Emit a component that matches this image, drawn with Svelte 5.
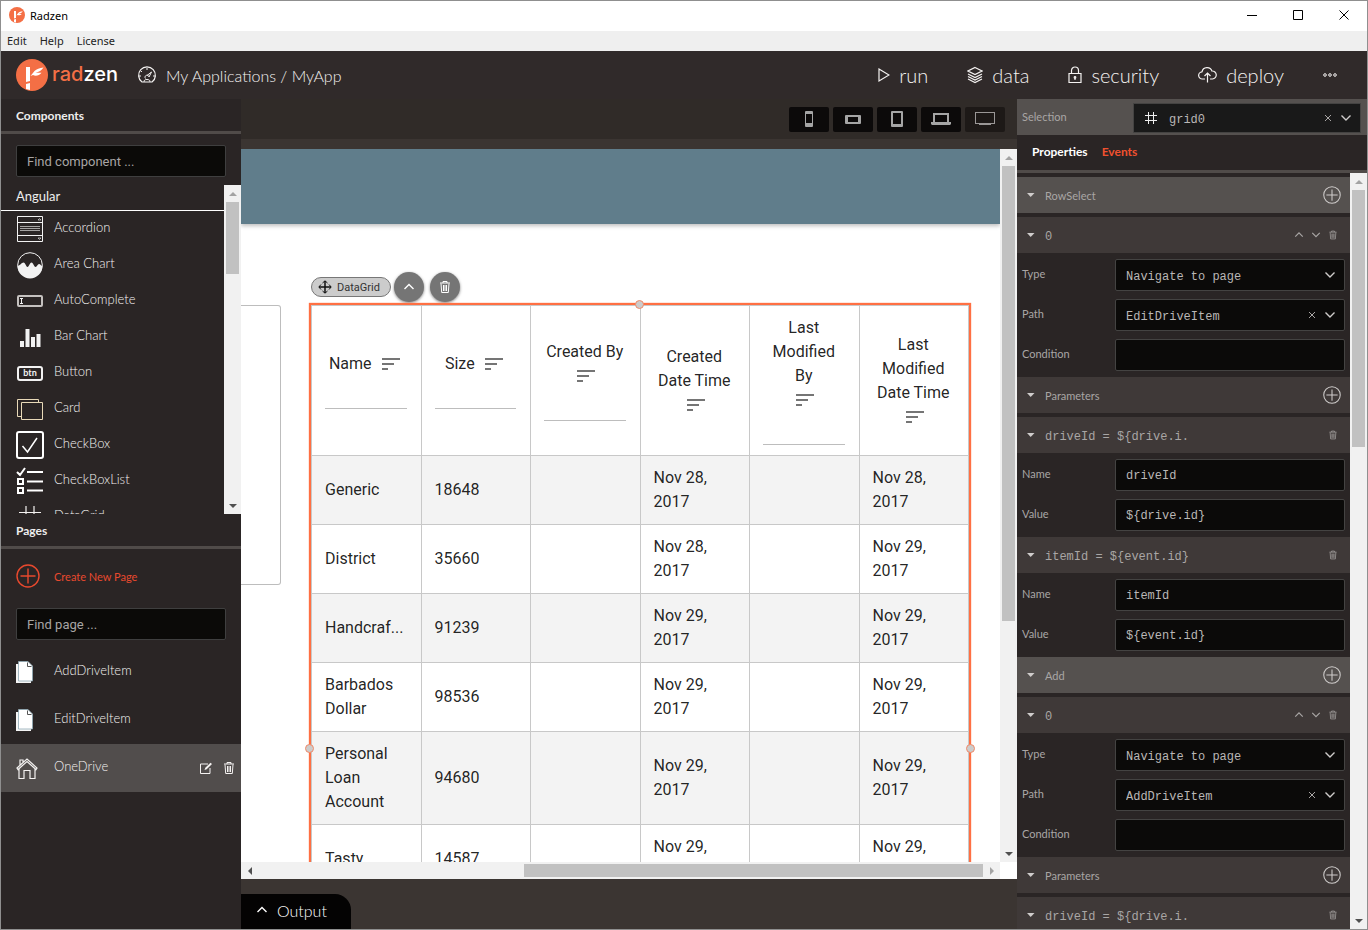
<script>
	const actions = ['run', 'data', 'security', 'deploy'];

	const devices = [
		{ icon: 'phone', text: 'Phone' },
		{ icon: 'phone-landscape', text: 'Phone landscape' },
		{ icon: 'tablet', text: 'Tablet' },
		{ icon: 'laptop', text: 'Laptop' },
		{ icon: 'desktop', text: 'Desktop', active: true }
	];

	const components = [
		{ icon: 'accordion', text: 'Accordion' },
		{ icon: 'area', text: 'Area Chart' },
		{ icon: 'autocomplete', text: 'AutoComplete' },
		{ icon: 'bars', text: 'Bar Chart' },
		{ icon: 'btn', text: 'Button' },
		{ icon: 'card', text: 'Card' },
		{ icon: 'checkbox', text: 'CheckBox' },
		{ icon: 'checklist', text: 'CheckBoxList' },
		{ icon: 'datagrid', text: 'DataGrid' }
	];

	const pages = [
		{ icon: 'page', text: 'AddDriveItem' },
		{ icon: 'page', text: 'EditDriveItem' },
		{ icon: 'home', text: 'OneDrive', active: true }
	];

	const columns = [
		{ title: 'Name', filter: true },
		{ title: 'Size', filter: true },
		{ title: 'Created By', filter: true },
		{ title: 'Created Date Time' },
		{ title: 'Last Modified By', filter: true },
		{ title: 'Last Modified Date Time' }
	];

	const rows = [
		['Generic', '18648', '', 'Nov 28, 2017', '', 'Nov 28, 2017'],
		['District', '35660', '', 'Nov 28, 2017', '', 'Nov 29, 2017'],
		['Handcraf...', '91239', '', 'Nov 29, 2017', '', 'Nov 29, 2017'],
		['Barbados Dollar', '98536', '', 'Nov 29, 2017', '', 'Nov 29, 2017'],
		['Personal Loan Account', '94680', '', 'Nov 29, 2017', '', 'Nov 29, 2017'],
		['Tasty', '14587', '', 'Nov 29, 2017', '', 'Nov 29, 2017']
	];

	const events = [
		{
			name: 'RowSelect',
			path: 'EditDriveItem',
			params: [
				{ title: 'driveId = ${drive.i.', name: 'driveId', value: '${drive.id}' },
				{ title: 'itemId = ${event.id}', name: 'itemId', value: '${event.id}' }
			]
		},
		{
			name: 'Add',
			path: 'AddDriveItem',
			params: [{ title: 'driveId = ${drive.i.', name: 'driveId', value: '${drive.id}' }]
		}
	];
</script>

{#snippet icon(name)}
	{#if name === 'logo'}
		<svg class="ic" viewBox="0 0 32 32" width="32" height="32">
			<circle cx="16" cy="16" r="16" fill="#f46f45" />
			<path d="M10 8h4v14l-4 1zM10 25l4-1v7l-4-1z" fill="#fff" />
			<path d="M14.500 17l4-5c2-2 5-3 9-3.500-2 3-4.500 4.300-8 5.300h6c-2 2.700-6 3.700-8.500 2.200z" fill="#fff" />
		</svg>
	{:else if name === 'gauge'}
		<svg class="ic line" viewBox="0 0 20 18" width="20" height="18">
			<path d="M5 16a8.400 8.400 0 1 1 10 0z" stroke-width="1.200" />
			<path d="M8.500 12.500a2 2 0 1 1 3.500-1.500l2.500-5-4.500 3.500M10 2v2M4 5l1 1M2 10h2M16 10h2M7 16c0-2 1-2.500 3-2.500s3 .5 3 2.500" />
		</svg>
	{:else if name === 'run'}
		<svg class="ic line" viewBox="0 0 12 16" width="12" height="16"><path d="M1 2l10 6-10 6z" stroke-width="1.200" /></svg>
	{:else if name === 'data'}
		<svg class="ic line" viewBox="0 0 16 18" width="16" height="18" stroke-width="1.200">
			<path d="M8 1.500l7 3.500-7 3.500L1 5zM1 8l7 3.500L15 8M1 10.500L8 14l7-3.500M1 13l7 3.500 7-3.500" />
		</svg>
	{:else if name === 'security'}
		<svg class="ic line" viewBox="0 0 14 18" width="14" height="18" stroke-width="1.200">
			<path d="M1 7.500h12v9H1zM3.500 7.500v-3a3.500 3.500 0 0 1 7 0v3M7 11v3" />
			<circle cx="7" cy="11.500" r=".8" />
		</svg>
	{:else if name === 'deploy'}
		<svg class="ic line" viewBox="0 0 19 18" width="19" height="18" stroke-width="1.200">
			<path d="M7 13H4.500a3.600 3.600 0 0 1-.5-7.200A5.200 5.200 0 0 1 14 5a4 4 0 0 1 .5 8H12M9.500 16.500V7M6.500 10l3-3 3 3" />
		</svg>
	{:else if name === 'dots'}
		<svg class="ic line" viewBox="0 0 14 6" width="14" height="6">
			<circle cx="2" cy="3" r="1.300" /><circle cx="7" cy="3" r="1.300" /><circle cx="12" cy="3" r="1.300" />
		</svg>
	{:else if name === 'phone'}
		<svg class="ic" viewBox="0 0 22 16" width="22" height="16">
			<rect x="7" y="0" width="8" height="16" rx="1" fill="#a5a5a5" /><path d="M8 3h6v9H8z" fill="#0c0a0a" />
		</svg>
	{:else if name === 'phone-landscape'}
		<svg class="ic" viewBox="0 0 22 16" width="22" height="16">
			<rect x="3" y="4" width="16" height="9" rx="1" fill="#a5a5a5" /><path d="M6 6h10v5H6z" fill="#0c0a0a" />
		</svg>
	{:else if name === 'tablet'}
		<svg class="ic" viewBox="0 0 22 16" width="22" height="16">
			<rect x="5" y="0" width="12" height="16" rx="1" fill="#a5a5a5" /><path d="M7 2h8v11H7z" fill="#0c0a0a" />
		</svg>
	{:else if name === 'laptop'}
		<svg class="ic" viewBox="0 0 22 16" width="22" height="16">
			<path d="M3 2h16v9h2v2l-1 1H2l-1-1v-2h2z" fill="#a5a5a5" /><path d="M5 4h12v7H5z" fill="#0c0a0a" />
		</svg>
	{:else if name === 'desktop'}
		<svg class="ic" viewBox="0 0 22 16" width="22" height="16">
			<path d="M1 1h20v12h-4v1H5v-1H1z" fill="#9a9796" /><path d="M2 2h18v10H2z" fill="#1d1917" />
		</svg>
	{:else if name === 'accordion'}
		<svg class="ic" viewBox="0 0 28 28" width="28" height="28" fill="none" stroke="#f2f2f2">
			<path d="M1.500 1.500h25v25h-25zM1.500 7.500h25M1.500 20.500h25" />
			<path d="M4 11.500h20M4 13.500h20M4 15.500h20" stroke="#a5a3a2" />
			<path d="M22 5h3l-1.500-1.500zM22 23h3l-1.500 1.500z" stroke-width=".6" />
		</svg>
	{:else if name === 'area'}
		<svg class="ic" viewBox="0 0 28 28" width="28" height="28">
			<circle cx="14" cy="14" r="12.300" fill="none" stroke="#f2f2f2" />
			<path d="M1.500 15c2.500-.3 4-3.500 6-3.500s2.500 4.500 4 4.500 2.200-4.500 4-4.500 2.500 4.500 4 4.500 2-3 3.500-3 2 2 3.500 2a12.500 12.500 0 0 1-25 0z" fill="#f2f2f2" />
		</svg>
	{:else if name === 'autocomplete'}
		<svg class="ic" viewBox="0 0 28 28" width="28" height="28" fill="none" stroke="#f2f2f2">
			<rect x="2" y="9" width="24" height="10" rx="1" stroke="#c4c1bf" stroke-width="2" />
			<path d="M4 11.500h3M5.500 11.500v5M4 16.500h3" />
		</svg>
	{:else if name === 'bars'}
		<svg class="ic" viewBox="0 0 28 28" width="28" height="28" fill="#f2f2f2">
			<path d="M4 18h4v6H4zM9.500 6h4v18h-4zM15 14h4v10h-4zM20.500 11h4v13h-4z" />
		</svg>
	{:else if name === 'btn'}
		<svg class="ic" viewBox="0 0 28 28" width="28" height="28">
			<rect x="2" y="8" width="24" height="13" rx="2" fill="none" stroke="#f2f2f2" stroke-width="2" />
			<text class="btn-text" x="14" y="17" text-anchor="middle">btn</text>
		</svg>
	{:else if name === 'card'}
		<svg class="ic" viewBox="0 0 28 28" width="28" height="28" fill="none" stroke="#e8d9b8">
			<path d="M5.500 21.500h-4v-17h21v3M5.500 7.500h21v17h-21z" />
		</svg>
	{:else if name === 'checkbox'}
		<svg class="ic" viewBox="0 0 28 28" width="28" height="28" fill="none" stroke="#fff">
			<rect x="1" y="1" width="26" height="26" rx="2" stroke-width="2" />
			<path d="M6.500 15l5 6L21 7" stroke-width="1.500" />
		</svg>
	{:else if name === 'checklist'}
		<svg class="ic" viewBox="0 0 28 28" width="28" height="28" fill="none" stroke="#fff" stroke-width="2">
			<path d="M1 5l3 3 5-7M2 12h5v5H2zM2 21h5v5H2zM11 5h16M11 14.500h16M11 23.500h16" />
		</svg>
	{:else if name === 'datagrid'}
		<svg class="ic line" viewBox="0 0 28 28" width="28" height="28" stroke-width="1.200">
			<path d="M10 3v22M18 3v22M3 9.500h22M3 18h22" />
		</svg>
	{:else if name === 'plus'}
		<svg class="ic line" viewBox="0 0 24 24" width="100%" height="100%" stroke-width="1.400">
			<circle cx="12" cy="12" r="11" /><path d="M12 4.500v15M4.500 12h15" />
		</svg>
	{:else if name === 'page'}
		<svg class="ic" viewBox="0 0 22 24" width="22" height="24">
			<path d="M0 4h3v17h12v2H0z" fill="#f5f5f5" />
			<path d="M2.500 1.500h9.500l4.500 4.500v15h-14z" fill="#fff" stroke="#8fa9b5" stroke-width=".8" />
			<path d="M11.500 2.500v4h4" fill="none" stroke="#555" />
		</svg>
	{:else if name === 'home'}
		<svg class="ic line" viewBox="0 0 22 24" width="22" height="24" stroke-width="1.200">
			<path d="M1 12L11 3l10 9-1 1.500L11 5.500 2 13.500zM3 12.500v10h5v-8h6v8h5v-10M4 9V4h3v2.500" />
		</svg>
	{:else if name === 'edit'}
		<svg class="ic line" viewBox="0 0 14 14" width="14" height="14">
			<path d="M9 3H1.500v9.500H11V7" /><path d="M5.500 9l.8-2.300 5.200-5L13 3 7.700 8.200z" fill="currentColor" stroke="none" />
		</svg>
	{:else if name === 'trash'}
		<svg class="ic line" viewBox="0 0 12 14" width="12" height="14">
			<path d="M1 3h10M4 3V1.500h4V3M2 3.500l.7 9h6.600l.7-9M4.500 5v6M6 5v6M7.500 5v6" />
		</svg>
	{:else if name === 'up'}
		<svg class="ic line" viewBox="0 0 12 8" width="12" height="8" stroke-width="1.400"><path d="M1.500 6L6 1.500 10.500 6" /></svg>
	{:else if name === 'down'}
		<svg class="ic line" viewBox="0 0 12 8" width="12" height="8" stroke-width="1.400"><path d="M1.500 1.500L6 6l4.500-4.500" /></svg>
	{:else if name === 'close'}
		<svg class="ic line" viewBox="0 0 8 8" width="8" height="8"><path d="M1 1l6 6M7 1L1 7" /></svg>
	{:else if name === 'caret'}
		<svg class="ic" viewBox="0 0 9 6" width="9" height="6"><path d="M1 1h7.500L4.700 5z" fill="#cfcccb" /></svg>
	{:else if name === 'hash'}
		<svg class="ic line" viewBox="0 0 14 14" width="14" height="14">
			<path d="M4.500 1v12M9.500 1v12M1 4.500h12M1 9.500h12" />
		</svg>
	{:else if name === 'move'}
		<svg class="ic" viewBox="0 0 14 14" width="14" height="14" fill="none" stroke="#111">
			<path d="M7 1v12M1 7h12" stroke-width="1.500" />
			<path d="M4.500 3L7 .8 9.500 3M4.500 11L7 13.200 9.500 11M3 4.500L.8 7 3 9.500M11 4.500L13.200 7 11 9.500" />
		</svg>
	{:else if name === 'sort'}
		<svg class="sort" viewBox="0 0 24 24" width="24" height="24">
			<path d="M3 6h18v2H3zM3 11h12v2H3zM3 16h6v2H3z" fill="#757575" />
		</svg>
	{/if}
{/snippet}

{#snippet scrollbar(dir, before, size, after)}
	<div class="scrollbar {dir}" aria-hidden="true">
		<span class="arrow back" class:end={before === 0}></span>
		<span style="flex-grow: {before}"></span>
		<span class="thumb" style="flex-grow: {size}"></span>
		<span style="flex-grow: {after}"></span>
		<span class="arrow forward" class:end={after === 0}></span>
	</div>
{/snippet}

<div class="window">
	<header class="titlebar">
		<span class="app-icon">{@render icon('logo')}</span>
		<span>Radzen</span>
		<div class="window-buttons">
			<button aria-label="Minimize"><svg class="ic line" width="11" height="11"><path d="M0 5.500h10" /></svg></button>
			<button aria-label="Maximize"><svg class="ic line" width="11" height="11"><path d="M.5.5h9v9h-9z" /></svg></button>
			<button aria-label="Close"><svg class="ic line" width="11" height="11"><path d="M.5.5l9 9M9.500.5l-9 9" /></svg></button>
		</div>
	</header>
	<nav class="menubar">
		<button>Edit</button>
		<button>Help</button>
		<button>License</button>
	</nav>

	<div class="appbar">
		<a class="logo" href="#home">{@render icon('logo')}<b><i>rad</i>zen</b></a>
		<a class="crumbs" href="#apps">{@render icon('gauge')}<span>My Applications / MyApp</span></a>
		<nav class="actions">
			{#each actions as action}
				<button>{@render icon(action)}{action}</button>
			{/each}
			<button aria-label="More">{@render icon('dots')}</button>
		</nav>
	</div>

	<div class="main">
		<aside class="sidebar">
			<section>
				<h2>Components</h2>
				<input class="search" type="text" placeholder="Find component ..." aria-label="Find component" />
				<div class="scroller">
					<div class="list">
						<h3>Angular</h3>
						<ul>
							{#each components as item}
								<li class="component">{@render icon(item.icon)}<span>{item.text}</span></li>
							{/each}
						</ul>
					</div>
					{@render scrollbar('vertical', 0, 72, 223)}
				</div>
			</section>
			<section>
				<h2>Pages</h2>
				<button class="create"><span class="plus">{@render icon('plus')}</span>Create New Page</button>
				<input class="search" type="text" placeholder="Find page ..." aria-label="Find page" />
				<ul class="pages">
					{#each pages as item}
						<li class="page" class:active={item.active}>
							{@render icon(item.icon)}
							<a href="#{item.text}">{item.text}</a>
							{#if item.active}
								<button aria-label="Edit page">{@render icon('edit')}</button>
								<button aria-label="Delete page">{@render icon('trash')}</button>
							{/if}
						</li>
					{/each}
				</ul>
			</section>
		</aside>

		<main class="designer">
			<div class="devices">
				{#each devices as device}
					<button class:active={device.active} aria-label={device.text}>{@render icon(device.icon)}</button>
				{/each}
			</div>
			<div class="canvas">
				<div class="preview">
					<div class="banner"></div>
					<div class="content">
						<div class="panel"></div>
						<div class="selected">
							<div class="selected-tools">
								<span class="tag">{@render icon('move')}DataGrid</span>
								<button aria-label="Select parent">{@render icon('up')}</button>
								<button aria-label="Delete component">{@render icon('trash')}</button>
							</div>
							<div class="outline">
								<table>
									<thead>
										<tr>
											{#each columns as col}
												<th>
													<span class="title">{col.title}</span>
													{@render icon('sort')}
													{#if col.filter}<input type="text" aria-label="Filter {col.title}" />{/if}
												</th>
											{/each}
										</tr>
									</thead>
									<tbody>
										{#each rows as row}
											<tr>
												{#each row as cell}<td>{cell}</td>{/each}
											</tr>
										{/each}
									</tbody>
								</table>
								<span class="handle top"></span>
								<span class="handle left"></span>
								<span class="handle right"></span>
							</div>
						</div>
					</div>
				</div>
				{@render scrollbar('vertical', 0, 455, 224)}
				{@render scrollbar('horizontal', 266, 459, 0)}
			</div>
			<div class="footer">
				<button class="output">{@render icon('up')}Output</button>
			</div>
		</main>

		<aside class="properties">
			<div class="selection">
				<label for="selection">Selection</label>
				<div class="combo">
					<span class="lead">{@render icon('hash')}</span>
					<select id="selection"><option>grid0</option></select>
					<button class="clear" aria-label="Clear selection">{@render icon('close')}</button>
					<span class="chevron">{@render icon('down')}</span>
				</div>
			</div>
			<div class="tabs">
				<button>Properties</button>
				<button class="active">Events</button>
			</div>
			<div class="scroller">
				<div class="events">
					{#each events as event, i}
						<div class="bar event">
							{@render icon('caret')}<span>{event.name}</span>
							<button class="add" aria-label="Add handler">{@render icon('plus')}</button>
						</div>
						<div class="bar spaced">
							{@render icon('caret')}<code>0</code>
							<button class="small" aria-label="Move up">{@render icon('up')}</button>
							<button class="small" aria-label="Move down">{@render icon('down')}</button>
							<button class="small" aria-label="Delete handler">{@render icon('trash')}</button>
						</div>
						<div class="fields">
							<div class="field">
								<label for="type{i}">Type</label>
								<div class="combo">
									<select id="type{i}"><option>Navigate to page</option></select>
									<span class="chevron">{@render icon('down')}</span>
								</div>
							</div>
							<div class="field">
								<label for="path{i}">Path</label>
								<div class="combo">
									<select id="path{i}"><option>{event.path}</option></select>
									<button class="clear" aria-label="Clear path">{@render icon('close')}</button>
									<span class="chevron">{@render icon('down')}</span>
								</div>
							</div>
							<div class="field">
								<label for="condition{i}">Condition</label>
								<input id="condition{i}" type="text" />
							</div>
						</div>
						<div class="bar">
							{@render icon('caret')}<span>Parameters</span>
							<button class="add" aria-label="Add parameter">{@render icon('plus')}</button>
						</div>
						{#each event.params as param, j}
							<div class="bar" class:spaced={j === 0}>
								{@render icon('caret')}<code>{param.title}</code>
								<button class="small" aria-label="Delete parameter">{@render icon('trash')}</button>
							</div>
							<div class="fields">
								<div class="field">
									<label for="name{i}{j}">Name</label>
									<input id="name{i}{j}" type="text" value={param.name} />
								</div>
								<div class="field">
									<label for="value{i}{j}">Value</label>
									<input id="value{i}{j}" type="text" value={param.value} />
								</div>
							</div>
						{/each}
					{/each}
				</div>
				{@render scrollbar('vertical', 0, 257, 465)}
			</div>
		</aside>
	</div>
</div>

<style>
	:global(body) {
		margin: 0;
	}
	* {
		box-sizing: border-box;
	}
	.window {
		display: flex;
		flex-direction: column;
		height: 100vh;
		border: 1px solid #8f8f8f;
		overflow: hidden;
		background: #2a2525;
		color: #f4f2f1;
		font-family: Lato, sans-serif;
		font-size: 13px;
		font-weight: 300;
	}
	button {
		display: flex;
		align-items: center;
		padding: 0;
		border: 0;
		background: none;
		color: inherit;
		font: inherit;
		cursor: pointer;
	}
	ul {
		margin: 0;
		padding: 0;
		list-style: none;
	}
	.ic {
		display: block;
		flex: none;
	}
	.line {
		fill: none;
		stroke: currentColor;
	}
	.btn-text {
		fill: #f2f2f2;
		font: bold 9px Lato, sans-serif;
	}

	/* window frame */
	.titlebar {
		display: flex;
		align-items: center;
		flex: none;
		height: 30px;
		padding: 0 0 2px 8px;
		gap: 5px;
		background: #fff;
		color: #000;
		font: 11px 'Noto Sans', sans-serif;
	}
	.app-icon :global(svg) {
		width: 16px;
		height: 16px;
	}
	.window-buttons {
		display: flex;
		margin-left: auto;
	}
	.window-buttons button {
		justify-content: center;
		width: 46px;
		height: 28px;
	}
	.menubar {
		display: flex;
		flex: none;
		height: 20px;
		padding: 0 0 2px 6px;
		gap: 13px;
		background: #efefef;
		color: #222;
		font: 11px 'Noto Sans', sans-serif;
	}
	.appbar {
		display: flex;
		align-items: center;
		flex: none;
		height: 48px;
		padding: 0 30px 0 15px;
		background: #302a2a;
	}
	.logo {
		display: flex;
		align-items: center;
		gap: 4px;
		color: #fff;
		text-decoration: none;
	}
	.logo b {
		padding-bottom: 2px;
		font: 500 20px Inter, sans-serif;
	}
	.logo i {
		color: #f46f45;
		font-style: normal;
	}
	.crumbs {
		display: flex;
		align-items: center;
		gap: 9px;
		margin-left: 19px;
		color: inherit;
		font-size: 16px;
		text-decoration: none;
	}
	.actions {
		display: flex;
		gap: 39px;
		margin-left: auto;
		font-size: 20px;
	}
	.actions button {
		gap: 9px;
		padding-bottom: 1px;
	}
	.main {
		display: flex;
		flex: 1;
		min-height: 0;
	}

	/* left side */
	.sidebar {
		display: flex;
		flex-direction: column;
		flex: none;
		width: 240px;
	}
	.sidebar section {
		display: flex;
		flex-direction: column;
		flex: 1 1 0;
		min-height: 0;
	}
	h2 {
		flex: none;
		margin: 0;
		padding: 2px 15px 0;
		border-bottom: 3px solid #504b49;
		color: #eee;
		font-size: 12px;
		font-weight: 700;
		line-height: 30px;
	}
	.search {
		flex: none;
		height: 32px;
		margin: 11px 15px 8px;
		padding: 0 10px;
		border: 1px solid #3f3f3f;
		border-radius: 2px;
		background: #0b0a08;
		color: #a8a5a4;
		font: 13px Roboto, sans-serif;
	}
	.search::placeholder {
		color: #a8a5a4;
		opacity: 1;
	}
	.scroller {
		display: flex;
		flex: 1;
		min-height: 0;
	}
	.list {
		flex: 1;
		overflow: hidden;
	}
	h3 {
		margin: 0;
		padding: 0 15px 2px;
		border-bottom: 1px solid #fff;
		color: #eee;
		font-size: 13px;
		font-weight: 400;
		line-height: 23px;
	}
	.component {
		display: flex;
		align-items: center;
		height: 36px;
		padding-left: 15px;
		gap: 10px;
	}
	.component span {
		padding-bottom: 4px;
	}
	.create {
		flex: none;
		height: 54px;
		padding-left: 15px;
		gap: 14px;
		color: #e8492e;
		font-size: 11px;
		font-weight: 400;
	}
	.plus {
		width: 24px;
		height: 24px;
	}
	.create + .search {
		margin-top: 5px;
	}
	.page {
		display: flex;
		align-items: center;
		height: 48px;
		padding: 0 6px 0 15px;
		gap: 10px;
	}
	.page a {
		flex: 1;
		padding: 0 0 4px 6px;
		color: inherit;
		text-decoration: none;
	}
	.page.active {
		background: #514d4c;
	}

	/* scrollbars */
	.scrollbar {
		display: flex;
		flex: none;
		background: #f1f1f1;
	}
	.scrollbar span {
		flex: 0 0 0px;
	}
	.scrollbar.vertical {
		flex-direction: column;
		width: 17px;
	}
	.scrollbar.horizontal {
		height: 17px;
	}
	.scrollbar .thumb {
		background: #c1c1c1;
	}
	.vertical .thumb {
		margin: 0 2px;
	}
	.horizontal .thumb {
		margin: 2px 0;
	}
	.scrollbar .arrow {
		display: grid;
		place-items: center;
		flex: 0 0 17px;
		color: #505050;
	}
	.scrollbar .arrow.end {
		color: #a3a3a3;
	}
	.arrow::before {
		content: '';
		border: 4px solid transparent;
	}
	.vertical .back::before {
		border-top: 0;
		border-bottom-color: currentColor;
	}
	.vertical .forward::before {
		border-bottom: 0;
		border-top-color: currentColor;
	}
	.horizontal .back::before {
		border-left: 0;
		border-right-color: currentColor;
	}
	.horizontal .forward::before {
		border-right: 0;
		border-left-color: currentColor;
	}

	/* design surface */
	.designer {
		display: flex;
		flex-direction: column;
		flex: 1;
		min-width: 0;
		background: #3b3532;
	}
	.devices {
		display: flex;
		align-items: center;
		justify-content: flex-end;
		flex: none;
		height: 40px;
		margin-bottom: 10px;
		padding-right: 12px;
		gap: 4px;
		background: #302b28;
	}
	.devices button {
		justify-content: center;
		width: 40px;
		height: 25px;
		border-radius: 2px;
		background: #0c0a0a;
	}
	.devices button.active {
		background: #1d1917;
	}
	.canvas {
		display: grid;
		grid-template: minmax(0, 1fr) 17px / minmax(0, 1fr) 17px;
		flex: 1;
		min-height: 0;
		background: #fff;
	}
	.preview {
		overflow: hidden;
		color: rgba(0, 0, 0, 0.87);
		font: 16px/24px Roboto, sans-serif;
	}
	.banner {
		height: 75px;
		background: #607d8b;
		box-shadow: 0 2px 4px rgba(0, 0, 0, 0.25);
	}
	.content {
		display: flex;
		align-items: flex-start;
		padding: 48px 29px 0 0;
		gap: 28px;
	}
	.panel {
		flex: none;
		width: 40px;
		height: 280px;
		margin-top: 33px;
		border: 1px solid #bdbdbd;
		border-left: 0;
		border-radius: 0 3px 3px 0;
	}
	.selected {
		flex: 1;
		min-width: 0;
	}
	.selected-tools {
		display: flex;
		align-items: center;
		margin-bottom: 1px;
		padding-left: 2px;
		gap: 6px;
	}
	.tag {
		display: flex;
		align-items: center;
		height: 20px;
		margin-right: -3px;
		padding: 0 10px 0 6px;
		gap: 5px;
		border: 1px solid #777;
		border-radius: 10px;
		background: #ccc;
		color: #333;
		font: 11px Roboto, sans-serif;
	}
	.selected-tools button {
		justify-content: center;
		width: 30px;
		height: 30px;
		border-radius: 50%;
		background: #757575;
		box-shadow: 0 1px 3px rgba(0, 0, 0, 0.5);
		color: #fff;
	}
	.outline {
		position: relative;
		min-height: 892px;
		border: 2px solid #ff7043;
		box-shadow: 0 0 1px #ff7043;
	}
	table {
		width: 100%;
		border: 1px solid #c8c8c8;
		border-width: 1px 0 0 1px;
		border-spacing: 0;
		table-layout: fixed;
	}
	th,
	td {
		padding: 10px 14px 10px 13px;
		border: 1px solid #c8c8c8;
		border-width: 0 1px 1px 0;
		font-weight: 400;
		text-align: left;
		vertical-align: middle;
	}
	th {
		text-align: center;
	}
	.title {
		display: inline-block;
	}
	th input {
		display: block;
		width: 100%;
		height: 33px;
		padding: 0;
		border: 0;
		border-bottom: 1px solid #bdbdbd;
		background: none;
		font: inherit;
	}
	tbody tr:nth-child(odd) {
		background: #f3f3f3;
	}
	.sort {
		display: inline-block;
		margin-left: 3px;
		vertical-align: top;
	}
	.handle {
		position: absolute;
		width: 9px;
		height: 9px;
		border: 1px solid #f08a6a;
		border-radius: 50%;
		background: #ccc;
	}
	.handle.top {
		top: -5px;
		left: calc(50% - 5px);
	}
	.handle.left {
		top: calc(50% - 5px);
		left: -6px;
	}
	.handle.right {
		top: calc(50% - 5px);
		right: -6px;
	}
	.footer {
		flex: none;
		padding-top: 15px;
	}
	.output {
		height: 35px;
		padding: 0 24px 3px 15px;
		gap: 9px;
		border-radius: 0 16px 0 0;
		background: #040303;
		color: #fff;
		font-size: 16px;
	}

	/* right side */
	.properties {
		display: flex;
		flex-direction: column;
		flex: none;
		width: 350px;
		color: #a9a6a5;
		font-size: 11px;
		font-weight: 400;
	}
	.selection {
		display: flex;
		align-items: center;
		flex: none;
		height: 36px;
		padding: 2px 6px 0 5px;
		background: #55514f;
	}
	.selection label {
		flex: none;
		width: 111px;
		padding-bottom: 4px;
	}
	.combo {
		position: relative;
		flex: 1;
	}
	.selection .combo select {
		height: 30px;
		padding-left: 35px;
		border-radius: 0;
		background: #191919;
	}
	.lead,
	.clear,
	.chevron {
		position: absolute;
		top: 50%;
		transform: translateY(-50%);
	}
	.lead {
		left: 11px;
		color: #eee;
	}
	.clear {
		right: 29px;
	}
	.chevron {
		right: 9px;
		color: #cfcccb;
		pointer-events: none;
	}
	.tabs {
		display: flex;
		flex: none;
		height: 38px;
		padding: 0 15px 2px;
		gap: 14px;
		border-bottom: 3px solid #504b49;
		color: #fff;
		font-size: 12px;
		font-weight: 700;
	}
	.tabs .active {
		color: #f0512f;
	}
	.events {
		flex: 1;
		overflow: hidden;
		padding-top: 4px;
	}
	.bar {
		display: flex;
		align-items: center;
		height: 36px;
		padding: 0 9px;
		gap: 8px;
		background: #3f3938;
	}
	.bar.event {
		background: #55514f;
	}
	.bar.spaced {
		margin-top: 4px;
	}
	.bar span,
	.bar code {
		flex: 1;
		padding-left: 2px;
	}
	.bar code {
		padding-top: 3px;
	}
	.add {
		width: 18px;
		height: 18px;
		color: #cfcccb;
	}
	.small {
		justify-content: center;
		width: 9px;
		height: 18px;
	}
	.small:last-child {
		margin-right: 4px;
	}
	.small :global(svg) {
		width: 10px;
		height: 10px;
	}
	.fields {
		padding: 2px 5px;
	}
	.field {
		display: flex;
		align-items: center;
		height: 40px;
	}
	.field label {
		flex: none;
		width: 93px;
		padding-bottom: 3px;
	}
	select,
	.field input {
		flex: 1;
		width: 100%;
		min-width: 0;
		height: 32px;
		padding: 2px 10px 0;
		border: 1px solid #444342;
		border-radius: 2px;
		background: #0b0a09;
		color: #bab7b6;
		appearance: none;
	}
	select,
	code,
	.field input {
		font: 12px 'Liberation Mono', monospace;
	}
	select {
		display: block;
		padding-top: 4px;
	}
</style>
